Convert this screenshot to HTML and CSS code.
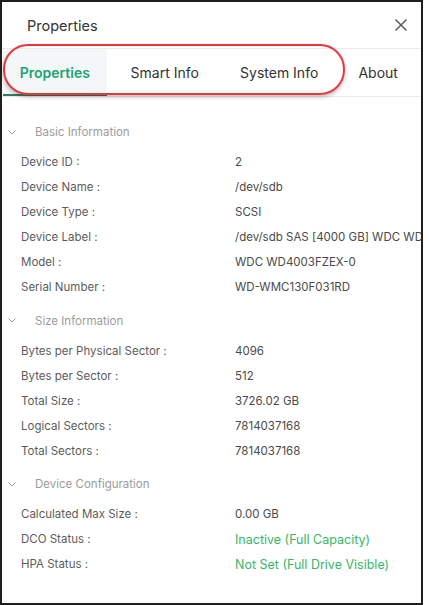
FILE: index.html
```html
<!DOCTYPE html>
<html lang="en">
<head>
<meta charset="utf-8">
<title>Properties</title>
<link rel="stylesheet" href="styles.css">
</head>
<body>
<div class="frame">
  <header class="dlg-head">
    <span class="dlg-title">Properties</span>
    <button class="close" aria-label="Close">
      <svg width="14" height="14" viewBox="0 0 14 14"><path d="M1.5 1.5 L12.5 12.5 M12.5 1.5 L1.5 12.5" stroke="#5b5b5b" stroke-width="1.5" fill="none"/></svg>
    </button>
  </header>
  <nav class="tabs">
    <div class="tab tab-1 active">Properties</div>
    <div class="tab tab-2">Smart Info</div>
    <div class="tab tab-3">System Info</div>
    <div class="tab tab-4">About</div>
    <div class="highlight"></div>
  </nav>
  <main class="content">
    <section class="group">
      <div class="group-head">
        <svg class="chev" width="8" height="5" viewBox="0 0 8 5"><path d="M0.5 0.5 L4 4 L7.5 0.5" stroke="#a0a0a0" stroke-width="1" fill="none"/></svg>
        <span>Basic Information</span>
      </div>
      <div class="row"><span class="lbl">Device ID :</span><span class="val">2</span></div>
      <div class="row"><span class="lbl">Device Name :</span><span class="val">/dev/sdb</span></div>
      <div class="row"><span class="lbl">Device Type :</span><span class="val">SCSI</span></div>
      <div class="row"><span class="lbl">Device Label :</span><span class="val">/dev/sdb SAS [4000 GB] WDC WD4003FZEX-0</span></div>
      <div class="row"><span class="lbl">Model :</span><span class="val">WDC WD4003FZEX-0</span></div>
      <div class="row"><span class="lbl">Serial Number :</span><span class="val">WD-WMC130F031RD</span></div>
    </section>
    <section class="group">
      <div class="group-head">
        <svg class="chev" width="8" height="5" viewBox="0 0 8 5"><path d="M0.5 0.5 L4 4 L7.5 0.5" stroke="#a0a0a0" stroke-width="1" fill="none"/></svg>
        <span>Size Information</span>
      </div>
      <div class="row"><span class="lbl">Bytes per Physical Sector :</span><span class="val">4096</span></div>
      <div class="row"><span class="lbl">Bytes per Sector :</span><span class="val">512</span></div>
      <div class="row"><span class="lbl">Total Size :</span><span class="val">3726.02 GB</span></div>
      <div class="row"><span class="lbl">Logical Sectors :</span><span class="val">7814037168</span></div>
      <div class="row"><span class="lbl">Total Sectors :</span><span class="val">7814037168</span></div>
    </section>
    <section class="group">
      <div class="group-head">
        <svg class="chev" width="8" height="5" viewBox="0 0 8 5"><path d="M0.5 0.5 L4 4 L7.5 0.5" stroke="#a0a0a0" stroke-width="1" fill="none"/></svg>
        <span>Device Configuration</span>
      </div>
      <div class="row"><span class="lbl">Calculated Max Size :</span><span class="val">0.00 GB</span></div>
      <div class="row"><span class="lbl">DCO Status :</span><span class="val ok">Inactive (Full Capacity)</span></div>
      <div class="row"><span class="lbl">HPA Status :</span><span class="val ok">Not Set (Full Drive Visible)</span></div>
    </section>
  </main>
</div>
</body>
</html>
```

FILE: styles.css
```css
html, body {
  margin: 0;
  padding: 0;
  background: #ffffff;
}

body {
  font-family: Inter, Roboto, "Liberation Sans", Arial, sans-serif;
  color: #333333;
}

.frame {
  box-sizing: border-box;
  width: 423px;
  height: 605px;
  border: 2px solid #1e1e1e;
  background: #ffffff;
  overflow: hidden;
  display: flex;
  flex-direction: column;
}

.dlg-head {
  height: 46px;
  flex: none;
  display: flex;
  align-items: center;
  justify-content: space-between;
  padding: 0 13px 0 25px;
  border-bottom: 1px solid #ebebeb;
}

.dlg-title {
  font-size: 14.5px;
  color: #333333;
}

.close {
  border: 0;
  background: none;
  padding: 0;
  width: 14px;
  height: 14px;
  display: flex;
}

.tabs {
  position: relative;
  height: 47px;
  flex: none;
  display: flex;
  border-bottom: 1px solid #ebebeb;
}

.tab {
  display: flex;
  align-items: center;
  justify-content: center;
  font-size: 14px;
  color: #333333;
  box-sizing: border-box;
}

.tab-1 { width: 104px; margin-left: 1px; }
.tab-2 { width: 117px; }
.tab-3 { width: 113px; }
.tab-4 { width: 86px; }

.tab.active {
  background: #f3f7f7;
  color: #1ea373;
  font-weight: 600;
  border-bottom: 2px solid #2d7f5e;
  padding-top: 1px;
}

.highlight {
  position: absolute;
  left: 1px;
  top: -5px;
  width: 342px;
  height: 51px;
  box-sizing: border-box;
  border: 2.5px solid #e8363d;
  border-radius: 25px;
  box-shadow: 0 2px 4px rgba(0, 0, 0, 0.28);
  pointer-events: none;
}

.content {
  padding-top: 25px;
  flex: 1;
}

.group + .group {
  margin-top: 11px;
}

.group-head {
  height: 20px;
  display: flex;
  align-items: center;
  font-size: 11.5px;
  color: #9c9c9c;
  margin-bottom: 7.5px;
}

.chev {
  margin-left: 6px;
  margin-right: 19px;
}

.row {
  height: 25px;
  display: flex;
  align-items: center;
  font-size: 11.5px;
  white-space: nowrap;
}

.lbl {
  width: 214px;
  padding-left: 19px;
  flex: none;
  color: #5c5c5c;
}

.val {
  color: #4a4a4a;
}

.val.ok {
  color: #34b866;
  font-size: 12.5px;
}
```
